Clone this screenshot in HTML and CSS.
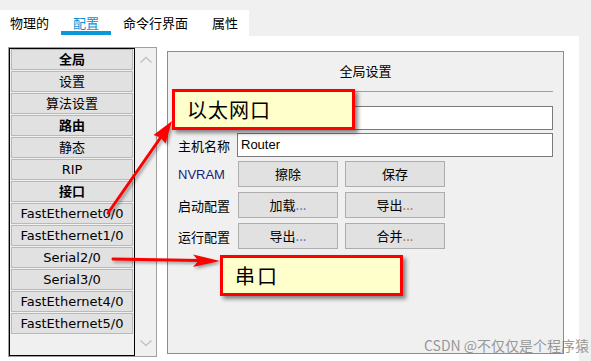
FILE: index.html
```html
<!DOCTYPE html>
<html lang="zh">
<head>
<meta charset="utf-8">
<title>配置</title>
<link rel="stylesheet" href="styles.css">
</head>
<body>
<div class="page">
  <div class="top">
    <div class="tabs">
      <div class="tab">物理的</div>
      <div class="tab active">配置</div>
      <div class="tab">命令行界面</div>
      <div class="tab">属性</div>
    </div>
  </div>
  <div class="main">
    <div class="listbox">
      <div class="list">
        <div class="item head">全局</div>
        <div class="item">设置</div>
        <div class="item">算法设置</div>
        <div class="item head">路由</div>
        <div class="item">静态</div>
        <div class="item">RIP</div>
        <div class="item head">接口</div>
        <div class="item">FastEthernet0/0</div>
        <div class="item">FastEthernet1/0</div>
        <div class="item">Serial2/0</div>
        <div class="item">Serial3/0</div>
        <div class="item">FastEthernet4/0</div>
        <div class="item">FastEthernet5/0</div>
      </div>
      <div class="scroll">
        <svg class="chev" width="14" height="8" viewBox="0 0 14 8"><polyline points="1.5,6.5 7,1.5 12.5,6.5" fill="none" stroke="#c4c4c4" stroke-width="1.6"/></svg>
        <svg class="chev" width="14" height="8" viewBox="0 0 14 8"><polyline points="1.5,1.5 7,6.5 12.5,1.5" fill="none" stroke="#c4c4c4" stroke-width="1.6"/></svg>
      </div>
    </div>
    <div class="panel">
      <div class="title">全局设置</div>
      <div class="sep"></div>
      <div class="rows">
        <div class="row">
          <div class="label"></div>
          <div class="field"></div>
        </div>
        <div class="row">
          <div class="label">主机名称</div>
          <div class="field">Router</div>
        </div>
        <div class="btnrows">
          <div class="brow">
            <div class="label nv">NVRAM</div>
            <div class="btn">擦除</div>
            <div class="btn">保存</div>
          </div>
          <div class="brow">
            <div class="label">启动配置</div>
            <div class="btn">加载<span class="dots a">...</span></div>
            <div class="btn">导出<span class="dots b">...</span></div>
          </div>
          <div class="brow">
            <div class="label">运行配置</div>
            <div class="btn">导出<span class="dots a">...</span></div>
            <div class="btn">合并<span class="dots b">...</span></div>
          </div>
        </div>
      </div>
    </div>
  </div>

  <svg class="arrows" width="591" height="361" viewBox="0 0 591 361">
    <g fill="#ff0000" stroke="none">
      <line x1="108" y1="213" x2="161" y2="137" stroke="#ff0000" stroke-width="3" stroke-linecap="round"/>
      <polygon points="172,121 165.5,143.5 160.5,137.5 153.5,135"/>
      <line x1="113" y1="259" x2="199" y2="260.5" stroke="#ff0000" stroke-width="3" stroke-linecap="round"/>
      <polygon points="220,261 193,254.5 198.5,260.7 193,267"/>
    </g>
  </svg>

  <div class="callout c1">以太网口</div>
  <div class="callout c2">串口</div>
  <div class="mark">CSDN @不仅仅是个程序猿</div>
</div>
</body>
</html>
```

FILE: styles.css
```css
html, body {
  margin: 0;
  padding: 0;
}
body {
  background: #f0f0f0;
  font-family: "Noto Sans CJK SC", "Liberation Sans", sans-serif;
  font-size: 13px;
  color: #000;
}
.page {
  position: relative;
  width: 591px;
  height: 361px;
  overflow: hidden;
}
.top {
  height: 36px;
  padding-top: 10px;
  box-sizing: border-box;
}
.tabs {
  display: flex;
  width: 249px;
  height: 26px;
  background: #fff;
}
.tab {
  position: relative;
  padding: 0 12px;
  line-height: 26px;
  font-size: 13px;
  white-space: nowrap;
}
.tab:first-child {
  padding-left: 10px;
}
.tab.active {
  color: #0b8fd4;
}
.tab.active::after {
  content: "";
  position: absolute;
  left: 0;
  right: 0;
  top: 21px;
  height: 4px;
  background: #0a98d8;
}
.main {
  display: flex;
  align-items: flex-start;
  gap: 10px;
  width: 579px;
  height: 325px;
  background: #fff;
  padding: 11px 0 0 8px;
  box-sizing: border-box;
}
.listbox {
  display: flex;
  width: 149px;
  height: 310px;
  border: 1px solid #a0a0a0;
  box-sizing: border-box;
}
.list {
  display: flex;
  flex-direction: column;
  gap: 1px;
  width: 126px;
  height: 308px;
  border: 1px solid #000;
  padding: 0 1px;
  box-sizing: border-box;
  background: #f0f0f0;
}
.item {
  height: 21px;
  line-height: 19px;
  border: 1px solid #b9b9b9;
  background: #e1e1e1;
  box-sizing: border-box;
  text-align: center;
  font-family: "DejaVu Sans", "Noto Sans CJK SC", sans-serif;
  font-size: 13px;
  white-space: nowrap;
  overflow: hidden;
}
.item.head {
  font-weight: bold;
}
.scroll {
  flex: 1;
  display: flex;
  flex-direction: column;
  justify-content: space-between;
  align-items: center;
  padding: 8px 0 9px;
  background: #f0f0f0;
}
.chev {
  display: block;
}
.panel {
  width: 397px;
  height: 303px;
  margin-top: 4px;
  border: 1px solid #8c8c8c;
  background: #f0f0f0;
  box-sizing: border-box;
  padding: 9px 10px 0 10px;
}
.title {
  text-align: center;
  line-height: 20px;
}
.sep {
  height: 1px;
  background: #a0a0a0;
  margin-top: 10px;
}
.rows {
  display: flex;
  flex-direction: column;
  gap: 3px;
  margin-top: 14px;
}
.row {
  display: flex;
  align-items: center;
  height: 24px;
}
.label {
  width: 59px;
  flex: none;
  white-space: nowrap;
}
.label.nv {
  font-family: "Liberation Sans", sans-serif;
  color: #1c1c78;
}
.field {
  flex: 1;
  height: 24px;
  border: 1px solid #7a7a7a;
  background: #fff;
  box-sizing: border-box;
  padding-left: 3px;
  line-height: 22px;
  font-family: "Liberation Sans", sans-serif;
  font-size: 13px;
}
.btnrows {
  display: flex;
  flex-direction: column;
  gap: 5px;
  margin-top: 1px;
}
.brow {
  display: flex;
  align-items: center;
  gap: 7px;
  height: 26px;
}
.brow .label {
  margin-right: -6px;
}
.btn {
  width: 100px;
  height: 26px;
  border: 1px solid #adadad;
  background: #e1e1e1;
  box-sizing: border-box;
  text-align: center;
  line-height: 24px;
}
.dots.a {
  color: #3b78b8;
}
.dots.b {
  color: #b0722c;
}
.arrows {
  position: absolute;
  left: 0;
  top: 0;
  pointer-events: none;
  filter: drop-shadow(2px 2px 1.5px rgba(0, 0, 0, 0.35));
}
.callout {
  position: absolute;
  width: 183px;
  height: 41px;
  box-sizing: border-box;
  border: 3px solid #ff0000;
  background: #ffffcc;
  box-shadow: 3px 3px 4px rgba(0, 0, 0, 0.45);
  display: flex;
  align-items: center;
  padding-left: 12px;
  font-size: 20px;
  letter-spacing: 1px;
  line-height: 1;
}
.c1 {
  left: 172px;
  top: 89px;
}
.c2 {
  left: 220px;
  top: 255px;
  letter-spacing: 2px;
}
.mark {
  position: absolute;
  left: 424px;
  top: 336px;
  font-size: 14px;
  line-height: 18px;
  color: rgba(110, 110, 110, 0.7);
  white-space: nowrap;
}
```
